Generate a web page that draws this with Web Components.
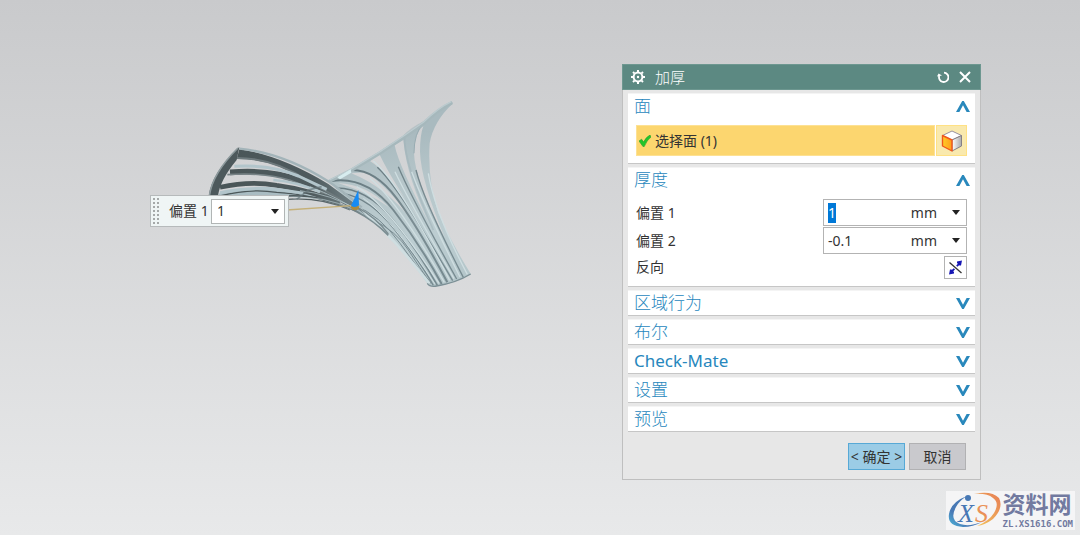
<!DOCTYPE html>
<html lang="zh-CN">
<head>
<meta charset="utf-8">
<title>加厚</title>
<style>
  html { height: 100%; }
  body { margin: 0; min-height: 100%; background: linear-gradient(#c9cacc, #e8e9ea); background-attachment: fixed;
    font: 14px/20px "Noto Sans", "Noto Sans CJK SC", sans-serif; color: #333; }
</style>
</head>
<body>
<cad-viewport>
  <cad-model></cad-model>
  <offset-bar></offset-bar>
  <tool-dialog heading="加厚">
    <tool-group heading="面" open>
      <select-row>选择面 (1)</select-row>
    </tool-group>
    <tool-group heading="厚度" open>
      <thickness-form></thickness-form>
    </tool-group>
    <tool-group heading="区域行为"></tool-group>
    <tool-group heading="布尔"></tool-group>
    <tool-group heading="Check-Mate" lang="en"></tool-group>
    <tool-group heading="设置"></tool-group>
    <tool-group heading="预览"></tool-group>
  </tool-dialog>
  <site-mark></site-mark>
</cad-viewport>

<script>
const base = `<style>
  :host { display: block; box-sizing: border-box; }
  * { box-sizing: border-box; }
  button, input { font: inherit; color: inherit; margin: 0; padding: 0; border: 0; background: none; border-radius: 0; outline: 0; }
  svg { display: block; }
</style>`;
function define(name, html, setup) {
  customElements.define(name, class extends HTMLElement {
    constructor() {
      super();
      this.attachShadow({ mode: 'open' }).innerHTML = base + html;
    }
    connectedCallback() { if (setup) setup(this, this.shadowRoot); }
  });
}

define('cad-viewport', `<style>
  :host { position: relative; min-height: 100vh; overflow: hidden; }
  ::slotted(*) { position: absolute; }
  ::slotted(cad-model) { left: 200px; top: 95px; }
  ::slotted(offset-bar) { left: 150px; top: 195px; }
  ::slotted(tool-dialog) { right: 99px; top: 64px; }
  ::slotted(site-mark) { right: 5px; bottom: 5px; }
</style><slot></slot>`);

/* Thickened surface: ribs fan out left and right and meet at the foot */
define('cad-model', `<svg width="280" height="200" viewBox="180 15 840 600" fill="none" aria-hidden="true">
  <defs>
    <linearGradient id="r" gradientUnits="userSpaceOnUse" x1="700" y1="150" x2="780" y2="590">
      <stop offset="0" stop-color="#a9babf"/><stop offset=".3" stop-color="#b5c5c9"/><stop offset=".7" stop-color="#bccdd1"/><stop offset="1" stop-color="#b4c6ca"/>
    </linearGradient>
    <linearGradient id="l" gradientUnits="userSpaceOnUse" x1="280" y1="0" x2="680" y2="0">
      <stop offset="0" stop-color="#4a5658"/><stop offset=".6" stop-color="#4f5b5e"/><stop offset="1" stop-color="#7c8d92"/>
    </linearGradient>
    <linearGradient id="k" gradientUnits="userSpaceOnUse" x1="600" y1="250" x2="880" y2="560">
      <stop offset="0" stop-color="#66797f"/><stop offset=".6" stop-color="#7b8d93"/><stop offset="1" stop-color="#768a90"/>
    </linearGradient>
  </defs>

  <path fill="url(#r)" fill-rule="evenodd" d="M565 272L632 238L720 185L795 135L850 97Q900 50 935 34L939 40Q880 95 869 160Q862 270 895 370Q935 460 992 551Q950 580 880 590L862 580Q800 490 740 430Q680 370 600 310Z
    M850 108Q822 130 822 190Q824 270 915 445Q842 270 840 185Q840 135 850 108Z
    M790 150L764 166Q775 225 875 415Q800 265 790 150Z
    M718 192L690 213Q745 245 850 405Q760 280 718 192Z
    M634 250L676 247Q740 285 815 390Q735 290 634 250Z
    M594 279Q680 283 745 350Q680 305 594 279Z"/>
  <path d="M850 97Q810 118 793 137Q792 220 880 420" stroke="#9fb2b8" stroke-width="5" stroke-opacity=".5"/>
  <g stroke="url(#k)" stroke-width="4">
    <path d="M828 240Q850 330 970 562"/>
    <path d="M775 230Q810 315 950 567"/>
    <path d="M712 232Q775 290 938 572"/>
    <path d="M633 240Q705 238 770 325T922 577" stroke-width="6"/>
    <path d="M575 273Q680 258 760 360T905 582" stroke-width="6"/>
    <path d="M590 294Q680 295 755 385T892 586" stroke-width="5"/>
    <path d="M610 310Q690 325 765 420T880 586" stroke-width="4"/>
    <path d="M640 345Q720 375 780 460T875 580" stroke-width="3"/>
    <path d="M700 390Q770 425 805 480T872 580" stroke-width="3"/>
  </g>
  <g stroke="#cfdee1" stroke-width="4">
    <path d="M865 250Q885 370 982 553"/>
    <path d="M815 245Q850 340 960 561"/>
    <path d="M765 245Q800 320 942 566"/>
    <path d="M700 213Q775 275 929 571"/>
    <path d="M690 265Q770 330 913 577"/>
    <path d="M650 290Q740 340 897 580"/>
    <path d="M670 325Q750 380 885 582" stroke-width="3"/>
    <path d="M655 352Q750 430 868 580" stroke-width="8"/>
  </g>
  <path d="M850 99Q822 130 822 190" stroke="#98acb2" stroke-width="3"/>
  <path d="M568 274L632 242L720 189L795 139L850 101Q895 57 936 38" stroke="#a6b8bc" stroke-width="10"/>
  <path d="M568 270L632 238L720 185L795 135L850 97Q895 53 934 35" stroke="#bccbcf" stroke-width="4"/>
  <path d="M592 262L632 238L634 248L600 268Z" fill="#d7ecef"/>

  <path d="M298 172L294 174Q215 250 206 318H234Q240 270 290 210Z" fill="#4d595c"/>
  <path d="M294 174Q217 250 208 318" stroke="#8d9a9d" stroke-width="5"/>
  <path d="M235 311Q330 285 440 300Q520 307 600 340L560 335Q500 318 440 322H240Z" fill="#a9bcc2"/>
  <g stroke="url(#l)">
    <path d="M240 292Q330 272 410 286Q500 298 600 338" stroke-width="14"/>
    <path d="M270 247Q400 238 480 272Q560 305 650 353" stroke-width="17"/>
    <path d="M240 318Q330 294 410 307Q520 312 650 364" stroke-width="4"/>
    <path d="M410 320Q540 306 650 365Q700 390 745 436" stroke-width="5"/>
    <path d="M440 328Q540 320 630 360" stroke-width="4"/>
    <path d="M470 310Q560 300 650 350Q710 385 745 432" stroke-width="4"/>
  </g>
  <path d="M298 178Q420 195 565 282L650 345L690 390Q590 325 500 273Q400 205 290 207Z" fill="url(#l)"/>
  <path d="M291 204Q400 204 500 270L610 333" stroke="#6e7a7d" stroke-width="6"/>
  <path d="M262 254Q370 246 450 271L560 312" stroke="#778386" stroke-width="5"/>
  <g stroke="#b2c5cb" stroke-width="9">
    <path d="M283 229Q390 222 475 258L560 298"/>
    <path d="M400 270Q470 275 540 306" stroke-width="8"/>
    <path d="M240 308Q330 288 420 299L490 310"/>
  </g>
  <path d="M298 176Q430 188 568 276Q610 305 665 352" stroke="#a3b4b9" stroke-width="7"/>
  <g stroke="#b9cbd0" stroke-width="2">
    <path d="M510 290Q590 320 670 372"/>
    <path d="M480 302Q570 312 655 360L720 408"/>
    <path d="M460 324Q550 316 640 358"/>
  </g>
  <path d="M470 328L505 300L545 290" stroke="#66767b" stroke-width="5" stroke-opacity=".7"/>

  <path d="M862 580Q870 592 890 588Q950 578 992 552" stroke="#7b8f95" stroke-width="4"/>
  <path d="M440 360L645 346" stroke="#c5b078" stroke-width="4"/>
  <ellipse cx="645" cy="352" rx="12" ry="9" fill="#aa8a42"/>
  <path d="M655 300L633 347Q645 356 657 346Z" fill="#168bf5"/>
</svg>`);

define('offset-bar', `<style>
  :host { display: flex; align-items: center; width: 139px; height: 32px; padding-right: 3px; background: #eff5f5; border: 1px solid #b6babb; }
  .grip { width: 7px; height: 26px; margin: 0 9px 0 2px; background: radial-gradient(circle at 1px 1px, #a5a9a9 1px, transparent 1px) 0 0 / 4px 4px; }
  label { flex: 1; white-space: pre; }
  .field { display: flex; width: 74px; height: 25px; background: #fff; border: 1px solid #b1b5b5; }
  input { flex: 1; min-width: 0; padding-left: 5px; }
  button { width: 18px; display: grid; place-items: center; }
</style>
<span class="grip"></span><label for="o">偏置 1</label>
<span class="field"><input id="o" value="1"><button aria-label="选项"><svg width="8" height="5"><path d="M0 0H8L4 5Z" fill="#222"/></svg></button></span>`);

define('tool-dialog', `<style>
  :host { width: 359px; background: #e7e7e7; border: 1px solid #bfbfbf; border-top: 0; }
  header { display: flex; align-items: center; height: 26px; margin: 0 -1px; padding: 0 4px 0 8px; background: #5c8982; border: 1px solid #6d9790; color: #fff; }
  h1 { flex: 1; margin: 0 0 0 10px; font-size: 15px; line-height: 24px; font-weight: 300; }
  header button { width: 22px; height: 22px; display: grid; place-items: center; }
  main { display: grid; gap: 3px; padding: 3px 5px 0; }
  footer { display: flex; justify-content: flex-end; gap: 4px; padding: 11px 14px 9px; }
  footer button { width: 57px; height: 27px; white-space: pre; background: #c9c9cd; border: 1px solid #b1b1b3; }
  footer .ok { background: #9bcce6; border-color: #57a9d6; }
</style>
<header>
  <svg width="14" height="14" viewBox="-7 -7 14 14" fill="none" stroke="#fff" aria-hidden="true">
    <circle r="4.4" stroke-width="2"/><circle r="1.2" fill="#fff" stroke="none"/>
    <path d="M0-7V-5M0 5V7M-7 0H-5M5 0H7M-5-5L-3.6-3.6M5 5L3.6 3.6M-5 5L-3.6 3.6M5-5L3.6-3.6" stroke-width="2"/>
  </svg>
  <h1></h1>
  <button aria-label="重置"><svg width="12" height="12" fill="none" stroke="#fff" stroke-width="1.8"><path d="M7 1.6A4.7 4.7 0 1 1 2.2 5"/><path d="M0 5.6L1.6 2.4L5 4.6Z" fill="#fff" stroke="none"/></svg></button>
  <button aria-label="关闭"><svg width="12" height="12" fill="none" stroke="#fff" stroke-width="2"><path d="M1 1L11 11M11 1L1 11"/></svg></button>
</header>
<main><slot></slot></main>
<footer><button class="ok">&lt; 确定 &gt;</button><button>取消</button></footer>`,
(host, root) => { root.querySelector('h1').textContent = host.getAttribute('heading'); });

define('tool-group', `<style>
  :host { background: #fff; border-bottom: 1px solid #c6c6c6; border-top: 1px solid #f4f4f4; }
  h2 { margin: 0; font-size: 17px; line-height: 24px; font-weight: 300; color: #2787bd; }
  :host(:lang(en)) h2 { font-weight: 400; }
  h2 button { display: flex; align-items: center; justify-content: space-between; width: 100%; height: 24px; padding: 0 5px 0 6px; text-align: left; }
  .body { display: none; padding: 0 8px; }
  :host([open]) .body { display: block; }
  :host([open]) svg { transform: rotate(180deg); }
</style>
<h2><button><span></span><svg width="14" height="11" viewBox="0 0 14 11" fill="#2988bc" aria-hidden="true"><path d="M0 0H3.4L7 6.8L10.6 0H14L7.8 11H6.2Z"/></svg></button></h2>
<div class="body"><slot></slot></div>`,
(host, root) => {
  root.querySelector('span').textContent = host.getAttribute('heading');
  root.querySelector('button').onclick = () => host.toggleAttribute('open');
});

define('select-row', `<style>
  :host { display: flex; gap: 1px; padding: 7px 0; }
  .pick { flex: 1; display: flex; align-items: center; gap: 4px; height: 31px; padding-left: 2px; background: #fcd66f; border: 1px solid #fde193; }
  .face { width: 31px; height: 31px; display: grid; place-items: center; background: #f9e9ae; border: 1px solid #ffe184; }
</style>
<button class="pick"><svg width="12" height="12" aria-hidden="true"><path d="M0 6L2.6 4.2L4.6 7Q7 2 11 0L12 2Q8 5 5.2 11.6H4Z" fill="#22c62a" stroke="#239d2c" stroke-width=".6"/></svg><span><slot></slot></span></button>
<button class="face" aria-label="面规则"><svg width="22" height="22" viewBox="0 0 22 22" stroke-linejoin="round">
  <defs><linearGradient id="a"><stop stop-color="#ffcc28"/><stop offset="1" stop-color="#ff9d1c"/></linearGradient><linearGradient id="b"><stop stop-color="#fff"/><stop offset="1" stop-color="#aaa"/></linearGradient></defs>
  <path d="M1.5 5.5L11 1L20.5 5.5L11 10Z" fill="#fff" stroke="#9892a0"/>
  <path d="M11 10L20.5 5.5V16L11 21Z" fill="url(#b)" stroke="#858085"/>
  <path d="M1.5 5.5L11 10V21L1.5 16Z" fill="url(#a)" stroke="#f0571d" stroke-width="1.4"/>
</svg></button>`);

define('measure-field', `<style>
  :host { display: flex; align-items: center; height: 27px; }
  label { flex: 1; white-space: pre; }
  .field { display: flex; align-items: center; width: 144px; height: 27px; background: #fff; border: 1px solid #b3b3b3; }
  input { flex: 1; min-width: 0; height: 20px; padding-left: 4px; }
  input::selection { background: #0078d7; color: #fff; }
  button { width: 20px; height: 25px; margin-left: 9px; display: grid; place-items: center; }
</style>
<label for="v"></label><span class="field"><input id="v"><span>mm</span><button aria-label="单位"><svg width="8" height="5"><path d="M0 0H8L4 5Z" fill="#222"/></svg></button></span>`,
(host, root) => {
  root.querySelector('label').textContent = host.getAttribute('label');
  const input = root.querySelector('input');
  input.value = host.getAttribute('value');
  if (host.hasAttribute('selected')) { input.focus(); input.select(); }
});

define('thickness-form', `<style>
  :host { display: grid; gap: 1px; padding: 7px 0; }
  .reverse { display: flex; align-items: center; justify-content: space-between; height: 24px; }
  .reverse button { width: 23px; height: 23px; display: grid; place-items: center; background: #fff; border: 1px solid #b3b3b3; }
</style>
<measure-field label="偏置 1" value="1" selected></measure-field>
<measure-field label="偏置 2" value="-0.1"></measure-field>
<div class="reverse"><label for="rev">反向</label><button id="rev"><svg width="15" height="15" viewBox="0 0 15 15" aria-hidden="true">
  <path d="M1.5 2.5L13.5 13" stroke="#333" stroke-width="1.3"/><path d="M3 12L6.4 8.8M8.8 6.2L12 3" stroke="#1616b4" stroke-width="1.8"/>
  <path d="M9 1.5L14 .5L13 5.5L11.5 5.5L9 3ZM6 13.5L1 14.5L2 9.5L3.5 9.5L6 12Z" fill="#1616b4"/></svg></button></div>`);

define('site-mark', `<style>
  :host { display: flex; align-items: center; gap: 1px; height: 39px; padding-right: 2px; background: #f5f5f6; color: #727aa0; }
  .name { font: 700 23px/27px "Liberation Sans", "Noto Sans CJK SC", sans-serif; height: 27px; }
  .url { font: 700 9px/10px "DejaVu Sans Mono", monospace; }
</style>
<svg width="56" height="39" viewBox="0 0 56 39" role="img" aria-label="XS">
  <defs><linearGradient id="o" x1="0" y1="1" x2="1" y2="0"><stop stop-color="#4eb9dc"/><stop offset=".3" stop-color="#4879b5"/><stop offset="1" stop-color="#4879b5"/></linearGradient>
  <linearGradient id="p" x1="0" y1="1" x2="1" y2="0"><stop stop-color="#f3c75b"/><stop offset="1" stop-color="#e77d55"/></linearGradient></defs>
  <path d="M21 5Q5 11 3 23Q1 35 17 36Q27 36 36 31Q23 36 14 33Q3 29 10 16Q13 10 21 5Z" fill="url(#o)"/>
  <path d="M28 3Q45-1 53 7Q58 17 47 28Q39 34 31 35Q43 30 48 22Q54 12 47 7Q41 2 28 3Z" fill="url(#p)"/>
  <circle cx="22" cy="7" r="3" fill="#4879b5"/>
  <text x="12" y="31" font-family="Liberation Serif, serif" font-style="italic" font-size="26" fill="#4777b4">X</text>
  <text x="29" y="31" font-family="Liberation Serif, serif" font-style="italic" font-size="26" fill="#ea9156">S</text>
</svg>
<div><div class="name">资料网</div><div class="url">ZL.XS1616.COM</div></div>`);
</script>
</body>
</html>
